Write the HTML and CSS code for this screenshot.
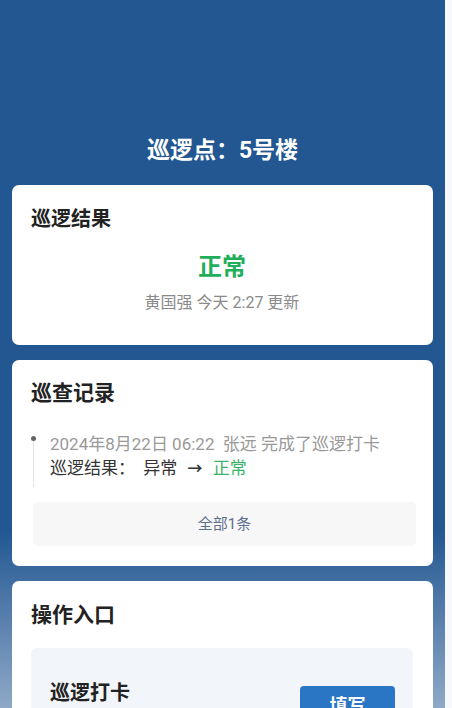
FILE: index.html
```html
<!DOCTYPE html>
<html lang="zh-CN">
<head>
    <meta charset="UTF-8">
    <meta name="viewport" content="width=device-width, initial-scale=1.0">
    <title>巡逻点详情</title>
    <link rel="stylesheet" href="styles.css">
</head>
<body>

<div class="page">
    <div class="header">
        <div class="pointName">巡逻点：5号楼</div>
    </div>

    <div class="card resultCard">
        <div class="cardTitle">巡逻结果</div>
        <div class="resultStatus">正常</div>
        <div class="resultMeta">黄国强 今天 2:27 更新</div>
    </div>

    <div class="card recordCard">
        <div class="cardTitle big">巡查记录</div>
        <div class="timeline">
            <div class="timelineItem">
                <div class="timelineLine"></div>
                <div class="timelineText">
                    <div class="recordHead">2024年8月22日 06:22&nbsp;&nbsp;张远 完成了巡逻打卡</div>
                    <div class="recordBody">
                        <span>巡逻结果：</span>
                        <span class="oldValue">异常</span>
                        <span class="arrow">&#8594;</span>
                        <span class="newValue">正常</span>
                    </div>
                </div>
            </div>
        </div>
        <div class="allRecords">全部1条</div>
    </div>

    <div class="card actionCard">
        <div class="cardTitle big">操作入口</div>
        <div class="actionPanel">
            <div class="actionRow">
                <div class="actionName">巡逻打卡</div>
                <div class="actionBtn">填写</div>
            </div>
        </div>
    </div>
</div>

</body>
</html>
```

FILE: styles.css
```css
/* Basic styling for the page */
body {
    font-family: Roboto, "Noto Sans CJK SC", sans-serif;
    background: #f6f8fb;
    color: #333;
    margin: 0;
    padding: 0;
}

.page {
    width: 445px;
    min-height: 900px;
    background: linear-gradient(to bottom, #225792 0, #225792 530px, #c7d3e3 800px, #eef2f7 900px);
    padding-bottom: 20px;
}

.header {
    padding: 136px 0 19px 0;
}

.pointName {
    color: #fff;
    font-size: 23px;
    font-weight: bold;
    line-height: 30px;
    text-align: center;
}

.card {
    background-color: #fff;
    border-radius: 7px;
    margin: 0 12px 15px 12px;
    padding: 21px 20px 20px 19px;
}

.cardTitle {
    font-size: 20px;
    font-weight: bold;
    line-height: 26px;
    color: #222;
}

.cardTitle.big {
    font-size: 21px;
    line-height: 28px;
}

.resultCard {
    padding-bottom: 31px;
}

.resultStatus {
    margin-top: 20px;
    text-align: center;
    color: #1fae5b;
    font-size: 24px;
    font-weight: bold;
    line-height: 30px;
}

.resultMeta {
    margin-top: 10px;
    text-align: center;
    color: #8a8a8a;
    font-size: 16px;
    line-height: 22px;
}

.recordCard {
    padding-top: 19px;
}

.timeline {
    margin-top: 25px;
    padding-left: 2px;
}

.timelineItem {
    display: flex;
}

.timelineLine {
    position: relative;
    width: 1px;
    background-color: #e4e4e4;
    margin-top: 6px;
    margin-right: 16px;
}

.timelineLine::before {
    content: "";
    position: absolute;
    top: -2px;
    left: -2px;
    width: 5px;
    height: 5px;
    border-radius: 50%;
    background-color: #666;
}

.timelineText {
    font-size: 17px;
    line-height: 24px;
    padding-bottom: 6px;
}

.recordHead {
    color: #999;
}

.recordBody {
    color: #333;
}

.oldValue {
    margin-left: 4px;
}

.arrow {
    margin: 0 6px;
    font-size: 15px;
    font-weight: bold;
}

.newValue {
    color: #3bb36a;
}

.allRecords {
    margin-top: 15px;
    margin-left: 2px;
    margin-right: -3px;
    height: 44px;
    line-height: 44px;
    background-color: #f7f7f7;
    border-radius: 5px;
    text-align: center;
    color: #5e6e8e;
    font-size: 15px;
}

.actionCard {
    padding-top: 20px;
}

.actionPanel {
    margin-top: 19px;
    background-color: #f2f5f9;
    border-radius: 6px;
    padding: 31px 18px 24px 19px;
}

.actionRow {
    display: flex;
    justify-content: space-between;
    align-items: flex-start;
}

.actionName {
    font-size: 20px;
    font-weight: bold;
    line-height: 28px;
    color: #222;
}

.actionBtn {
    margin-top: 7px;
    width: 95px;
    height: 40px;
    line-height: 40px;
    background-color: #2b75c5;
    border-radius: 4px;
    color: #fff;
    font-size: 18px;
    font-weight: bold;
    text-align: center;
}
```
